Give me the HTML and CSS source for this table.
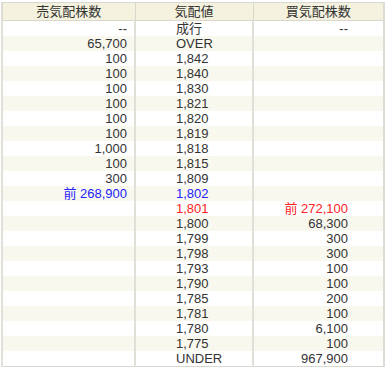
FILE: index.html
```html
<!DOCTYPE html>
<html lang="ja">
<head>
<meta charset="utf-8">
<link rel="stylesheet" href="styles.css">
</head>
<body>
<div class="wrap">
<table class="board">
<colgroup><col class="c1"><col class="c2"><col class="c3"></colgroup>
<thead>
<tr><th>売気配株数</th><th>気配値</th><th>買気配株数</th></tr>
</thead>
<tbody>
<tr><td class="ask">--</td><td class="price">成行</td><td class="bid">--</td></tr>
<tr><td class="ask">65,700</td><td class="price">OVER</td><td class="bid"></td></tr>
<tr><td class="ask">100</td><td class="price">1,842</td><td class="bid"></td></tr>
<tr><td class="ask">100</td><td class="price">1,840</td><td class="bid"></td></tr>
<tr><td class="ask">100</td><td class="price">1,830</td><td class="bid"></td></tr>
<tr><td class="ask">100</td><td class="price">1,821</td><td class="bid"></td></tr>
<tr><td class="ask">100</td><td class="price">1,820</td><td class="bid"></td></tr>
<tr><td class="ask">100</td><td class="price">1,819</td><td class="bid"></td></tr>
<tr><td class="ask">1,000</td><td class="price">1,818</td><td class="bid"></td></tr>
<tr><td class="ask">100</td><td class="price">1,815</td><td class="bid"></td></tr>
<tr><td class="ask">300</td><td class="price">1,809</td><td class="bid"></td></tr>
<tr><td class="ask blue">前 268,900</td><td class="price blue">1,802</td><td class="bid"></td></tr>
<tr><td class="ask"></td><td class="price red">1,801</td><td class="bid red">前 272,100</td></tr>
<tr><td class="ask"></td><td class="price">1,800</td><td class="bid">68,300</td></tr>
<tr><td class="ask"></td><td class="price">1,799</td><td class="bid">300</td></tr>
<tr><td class="ask"></td><td class="price">1,798</td><td class="bid">300</td></tr>
<tr><td class="ask"></td><td class="price">1,793</td><td class="bid">100</td></tr>
<tr><td class="ask"></td><td class="price">1,790</td><td class="bid">100</td></tr>
<tr><td class="ask"></td><td class="price">1,785</td><td class="bid">200</td></tr>
<tr><td class="ask"></td><td class="price">1,781</td><td class="bid">100</td></tr>
<tr><td class="ask"></td><td class="price">1,780</td><td class="bid">6,100</td></tr>
<tr><td class="ask"></td><td class="price">1,775</td><td class="bid">100</td></tr>
<tr><td class="ask"></td><td class="price">UNDER</td><td class="bid">967,900</td></tr>
</tbody>
</table>
</div>
</body>
</html>
```
FILE: styles.css
```css
html, body {
  margin: 0;
  padding: 0;
  background: #fff;
}
.wrap {
  padding: 2px 4px 2px 1px;
}
.board {
  border-collapse: collapse;
  table-layout: fixed;
  width: 382px;
  font-family: "Liberation Sans", Arial, "Noto Sans CJK JP", sans-serif;
  font-size: 13px;
  color: #333;
  border: 1px solid #d8d8d0;
  border-left: 2px solid #dcdcd4;
  border-right: 2px solid #dcdcd4;
}
.c1 { width: 133px; }
.c2 { width: 118px; }
.c3 { width: 131px; }
.board th {
  height: 17px;
  padding: 0;
  font-weight: normal;
  background: #f4f2de;
  border: 1px solid #d8d7cb;
  border-top: 0;
  line-height: 17px;
  text-align: center;
}
.board td {
  height: 15px;
  padding: 0;
  line-height: 15px;
  border-left: 2px solid #e0e0d8;
  white-space: nowrap;
}
.board tbody tr:nth-child(even) td {
  background: #f8f8ee;
}
.ask {
  text-align: right;
  padding-right: 7px !important;
}
.price {
  text-align: left;
  padding-left: 40px !important;
}
.bid {
  text-align: right;
  padding-right: 35px !important;
}
.blue { color: #2323ff; }
.red { color: #ff2323; }
```
